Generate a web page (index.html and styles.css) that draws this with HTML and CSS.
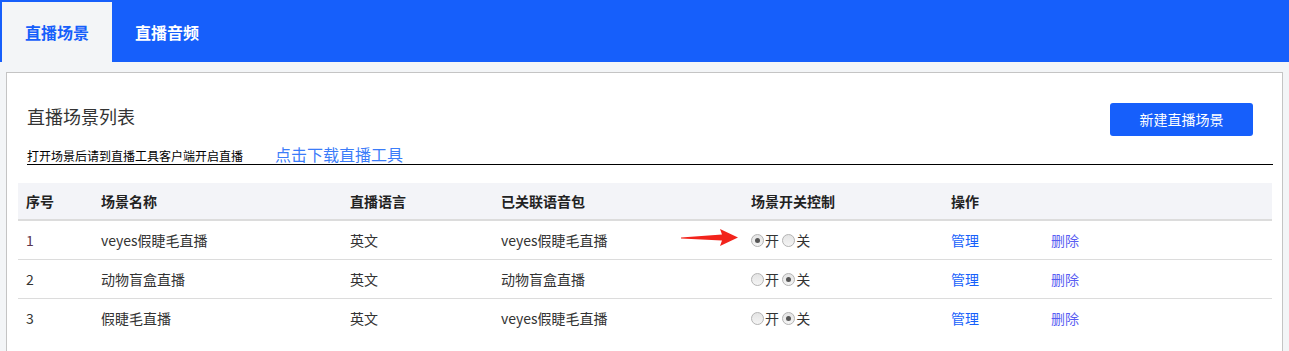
FILE: index.html
```html
<!DOCTYPE html>
<html>
    <head>
        <meta http-equiv="Content-Type" content="text/html; charset=utf-8"/>
        <link rel="stylesheet" href="styles.css">
    </head>
    <body>
        <div class='top_bar'>
            <a class='tab tab_active'>直播场景</a>
            <a class='tab'>直播音频</a>
        </div>
        <div class='page'>
            <div class='panel'>
                <div class='panel_head'>
                    <div class='title_row'>
                        <div class='panel_title'>直播场景列表</div>
                        <a class='btn_new'>新建直播场景</a>
                    </div>
                    <div class='tip_row'>
                        <span class='tip_text'>打开场景后请到直播工具客户端开启直播</span>
                        <a class='tip_link'>点击下载直播工具</a>
                    </div>
                </div>
                <table class='scene_table'>
                    <colgroup>
                        <col style='width:75px'>
                        <col style='width:249px'>
                        <col style='width:151px'>
                        <col style='width:250px'>
                        <col style='width:200px'>
                        <col style='width:100px'>
                        <col>
                    </colgroup>
                    <thead>
                        <tr>
                            <th>序号</th>
                            <th>场景名称</th>
                            <th>直播语言</th>
                            <th>已关联语音包</th>
                            <th>场景开关控制</th>
                            <th>操作</th>
                            <th></th>
                        </tr>
                    </thead>
                    <tbody>
                        <tr>
                            <td class='num_first'>1</td>
                            <td>veyes假睫毛直播</td>
                            <td>英文</td>
                            <td class='pack_cell'>veyes假睫毛直播
                                <svg class='red_arrow' width='58' height='18' viewBox='0 0 58 18'><polygon points='0,8.5 41,5.5 39,0 57,8.5 39,17 41,11.5 0,9.5' fill='#f2231b'/></svg>
                            </td>
                            <td><label class='switch'><input type='radio' name='s1' checked>开</label> <label class='switch'><input type='radio' name='s1'>关</label></td>
                            <td><a class='op_manage'>管理</a></td>
                            <td><a class='op_delete'>删除</a></td>
                        </tr>
                        <tr>
                            <td>2</td>
                            <td>动物盲盒直播</td>
                            <td>英文</td>
                            <td>动物盲盒直播</td>
                            <td><label class='switch'><input type='radio' name='s2'>开</label> <label class='switch'><input type='radio' name='s2' checked>关</label></td>
                            <td><a class='op_manage'>管理</a></td>
                            <td><a class='op_delete'>删除</a></td>
                        </tr>
                        <tr>
                            <td>3</td>
                            <td>假睫毛直播</td>
                            <td>英文</td>
                            <td>veyes假睫毛直播</td>
                            <td><label class='switch'><input type='radio' name='s3'>开</label> <label class='switch'><input type='radio' name='s3' checked>关</label></td>
                            <td><a class='op_manage'>管理</a></td>
                            <td><a class='op_delete'>删除</a></td>
                        </tr>
                    </tbody>
                </table>
            </div>
        </div>
    </body>
</html>
```
FILE: styles.css
```css
body
{
    margin: 0;
    background-color: #f3f5f7;
    font-family: "Noto Sans CJK SC", "Liberation Sans", sans-serif;
    color: #333;
}
.top_bar
{
    background-color: #165ffb;
    height: 62px;
    display: flex;
    box-sizing: border-box;
    padding: 2px 0 0 2px;
}
.tab
{
    display: flex;
    align-items: center;
    justify-content: center;
    width: 110px;
    height: 60px;
    font-size: 16px;
    font-weight: bold;
    color: #fff;
}
.tab_active
{
    background-color: #f3f5f7;
    color: #165ffb;
}
.page
{
    padding: 10px 6px 0 6px;
}
.panel
{
    background-color: #fff;
    border: 1px solid #c4c4c4;
    border-bottom: none;
    padding: 0 10px 0 11px;
    height: 279px;
    box-sizing: border-box;
}
.panel_head
{
    margin: 0 -1px 0 9px;
}
.title_row
{
    display: flex;
    justify-content: space-between;
    align-items: flex-start;
}
.panel_title
{
    margin-top: 31px;
    font-size: 18px;
    line-height: 24px;
}
.btn_new
{
    margin: 30px 20px 0 0;
    width: 143px;
    height: 33px;
    line-height: 33px;
    text-align: center;
    background-color: #165ffb;
    color: #fff;
    font-size: 14px;
    border-radius: 3px;
}
.tip_row
{
    display: flex;
    align-items: flex-end;
    border-bottom: 1px solid #000;
    height: 29px;
    box-sizing: border-box;
    padding-bottom: 1px;
}
.tip_text
{
    font-size: 12px;
    line-height: 14px;
    color: #000;
    margin-right: 32px;
}
.tip_link
{
    font-size: 16px;
    line-height: 18px;
    color: #3b7cf9;
}
.scene_table
{
    margin-top: 18px;
    width: 1254px;
    border-collapse: collapse;
    table-layout: fixed;
    font-size: 14px;
}
.scene_table th
{
    background-color: #f3f4f8;
    height: 36px;
    text-align: left;
    padding: 0 0 0 8px;
    font-weight: bold;
    color: #222;
    border-bottom: 2px solid #dcdcdc;
}
.scene_table td
{
    height: 38px;
    padding: 0 0 0 8px;
    border-bottom: 1px solid #dcdcdc;
    color: #333;
}
.scene_table tr:last-child td
{
    border-bottom: none;
}
.num_first
{
    color: #5b3550 !important;
}
.pack_cell
{
    position: relative;
}
.red_arrow
{
    position: absolute;
    left: 188px;
    top: 8px;
}
.switch input
{
    -webkit-appearance: none;
    appearance: none;
    margin: 0 1px 0 0;
    width: 13px;
    height: 13px;
    vertical-align: -1px;
    border: 1px solid #b4b4b4;
    border-radius: 50%;
    background: linear-gradient(#e4e4e4, #f4f4f4);
    box-sizing: border-box;
    position: relative;
}
.switch input:checked::after
{
    content: '';
    position: absolute;
    left: 3px;
    top: 3px;
    width: 5px;
    height: 5px;
    border-radius: 50%;
    background-color: #555;
}
.op_manage
{
    color: #165ffb;
}
.op_delete
{
    color: #5a5df2;
}
```
